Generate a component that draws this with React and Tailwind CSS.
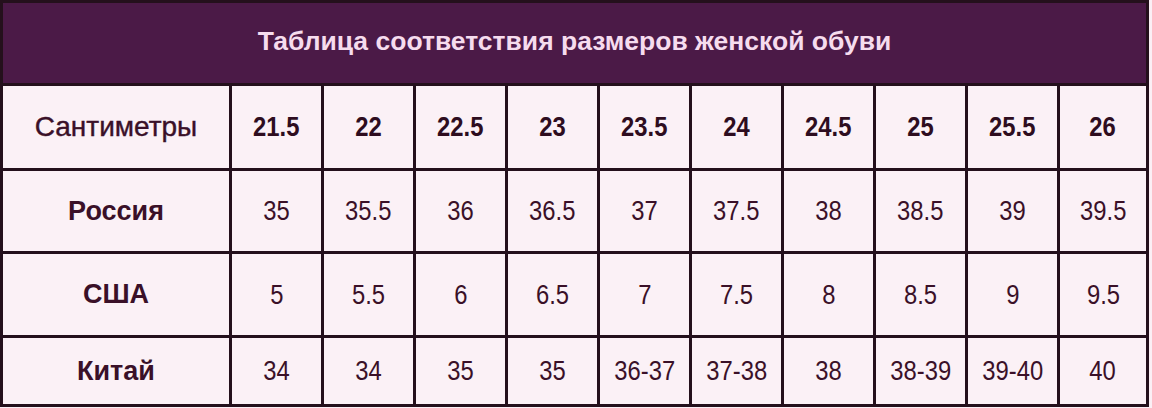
const HEAD = ['21.5', '22', '22.5', '23', '23.5', '24', '24.5', '25', '25.5', '26']

const ROWS = [
  { label: 'Россия', values: ['35', '35.5', '36', '36.5', '37', '37.5', '38', '38.5', '39', '39.5'] },
  { label: 'США', values: ['5', '5.5', '6', '6.5', '7', '7.5', '8', '8.5', '9', '9.5'] },
  { label: 'Китай', values: ['34', '34', '35', '35', '36-37', '37-38', '38', '38-39', '39-40', '40'] },
]

export default function App() {
  return (
    <div className="w-[1152px] h-[408px] bg-[#fbeff5] font-['Liberation_Sans',Arial,sans-serif]">
      <div className="w-[1149px] h-[407px] bg-[#24101c] p-[3px] grid gap-[3px] grid-cols-[226px_repeat(9,89px)_1fr] grid-rows-[80px_82px_80px_81px_1fr]">
        {/* Title */}
        <div className="col-span-11 bg-[#4b1a47] flex items-center justify-center text-[26.5px] font-bold text-[#f6dcee] pb-[2px]">
          Таблица соответствия размеров женской обуви
        </div>

        {/* Centimetres row */}
        <div className="bg-[#fbf1f6] flex items-center justify-center text-[28px] text-[#3a1028] [-webkit-text-stroke:0.4px_#3a1028]">
          Сантиметры
        </div>
        {HEAD.map((v, i) => (
          <Cell key={i} value={v} bold />
        ))}

        {ROWS.map(r => (
          <Row key={r.label} label={r.label} values={r.values} />
        ))}
      </div>
    </div>
  )
}

function Cell({ value, bold }) {
  return (
    <div className={`bg-[#fbf1f6] flex items-center justify-center text-[28px] ${bold ? 'font-bold text-[#2e0d20]' : 'text-[#3a1028]'}`}>
      <span className="inline-block scale-x-[0.85] whitespace-nowrap">{value}</span>
    </div>
  )
}

function Row({ label, values }) {
  return (
    <>
      <div className="bg-[#fbf1f6] flex items-center justify-center text-[27px] font-bold text-[#3a1028]">
        {label}
      </div>
      {values.map((v, i) => (
        <Cell key={i} value={v} />
      ))}
    </>
  )
}
